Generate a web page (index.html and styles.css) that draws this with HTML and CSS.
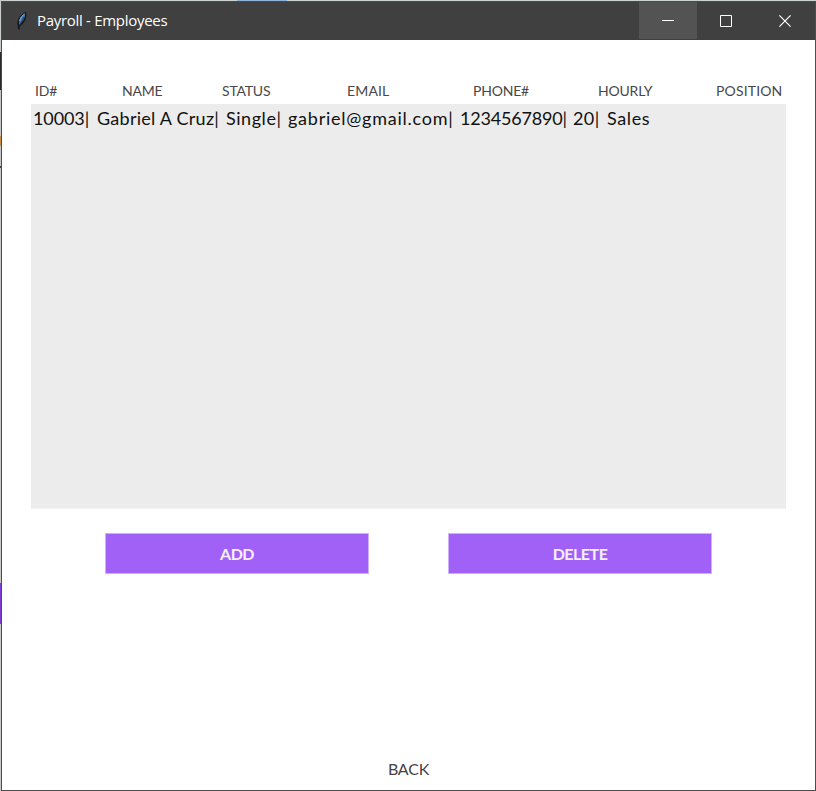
FILE: index.html
```
<!DOCTYPE html>
<html lang="en">
<head>
<meta charset="utf-8">
<title>Payroll - Employees</title>
<link rel="stylesheet" href="styles.css">
</head>
<body>
<div class="window">
  <header class="titlebar">
    <svg class="feather" width="12" height="20" viewBox="0 0 12 20">
      <path d="M2 18 L1.300 12 Q2 5 10 .8 Q11.500 7 7.500 12 L4 15.500 L3.300 19Z" fill="#151719"/>
      <path d="M3 12.500 Q3 6 9 2.500 Q9.500 7 6 11 L3.500 14Z" fill="#3f76b8"/>
      <path d="M3.500 10 Q4.500 5.500 8.500 3" stroke="#8cb4dc" fill="none"/>
      <path d="M3 16 L8 6" stroke="#18283c" stroke-width=".8"/>
    </svg>
    <h1 class="title">Payroll - Employees</h1>
    <button class="control minimize" aria-label="Minimize"><svg width="12" height="12"><path d="M0 5.500H12" stroke="#fff"/></svg></button>
    <button class="control" aria-label="Maximize"><svg width="12" height="12"><path d="M.5 .5H11.500V11.500H.5Z" stroke="#fff" fill="none"/></svg></button>
    <button class="control" aria-label="Close"><svg width="12" height="12"><path d="M.4 .4L11.600 11.600M11.600 .4L.4 11.600" stroke="#fff" stroke-width="1.200"/></svg></button>
  </header>
  <main class="content">
    <div class="headings">
      <span>ID#</span><span>NAME</span><span>STATUS</span><span class="wide">EMAIL</span><span>PHONE#</span><span>HOURLY</span><span class="wide">POSITION</span>
    </div>
    <div class="list">
      <div class="record">
        <span class="id">10003|</span><span class="name">Gabriel A Cruz|</span><span class="status">Single|</span><span class="email">gabriel@gmail.com|</span><span class="phone">1234567890|</span><span class="hourly">20|</span><span class="position">Sales</span>
      </div>
    </div>
    <div class="actions">
      <button class="action">ADD</button>
      <button class="action">DELETE</button>
    </div>
    <button class="back">BACK</button>
  </main>
</div>
</body>
</html>
```
FILE: styles.css
```
* { box-sizing: border-box; }
body {
  margin: 0;
  width: 816px;
  height: 791px;
  padding: 1px 0 0 1px;
  overflow: hidden;
  background:
    linear-gradient(#8db4d8, #8db4d8) 237px 0 / 50px 1px no-repeat,
    linear-gradient(90deg, #cbd2d0, #cbd2d0) 2px 0 / 814px 1px no-repeat,
    linear-gradient(#c6cbca 0 52px, #28282a 52px 90px, #c6c6c6 90px 136px, #c98b48 136px 146px, #c6c6c6 146px 166px, #444 166px 168px, #c8c8c8 168px 583px, #7d3fd0 583px 624px, #c8c8c8 624px);
}
button { border: 0; padding: 0; font: inherit; color: inherit; background: none; }
.window {
  width: 815px;
  height: 790px;
  display: flex;
  flex-direction: column;
  border: 1px solid #4c4c4c;
  border-top-color: #484b4a;
  background: #fff;
}
.titlebar {
  height: 38px;
  flex: none;
  display: flex;
  align-items: center;
  padding-left: 14px;
  background: #404040;
  color: #fff;
}
.feather { flex: none; margin-top: -1px; }
.title {
  flex: 1;
  margin: -2px 0 0 9px;
  font: 400 15px/20px "Open Sans", sans-serif;
  letter-spacing: -.3px;
}
.control {
  width: 58px;
  height: 38px;
  display: flex;
  align-items: center;
  justify-content: center;
}
.control:last-child { width: 60px; }
.minimize { height: 37px; margin-bottom: 1px; padding-top: 1px; background: #535353; }
.content {
  flex: 1;
  display: flex;
  flex-direction: column;
  padding: 41px 29px 11px;
  font-family: Lato, "Liberation Sans", sans-serif;
}
.headings {
  display: grid;
  grid-template-columns: 87px 100px 125px 126px 125px 118px 69px;
  padding-left: 4px;
  height: 23px;
  font-size: 14px;
  line-height: 20px;
  letter-spacing: -.2px;
  color: #484848;
}
.headings .wide { letter-spacing: .15px; }
.list {
  height: 405px;
  padding: 2px;
  background: #ececec;
  border-bottom: 1px solid #f3f3f3;
}
.record {
  display: grid;
  grid-template-columns: 64px 129px 62px 172px 113px 34px 50px;
  font-size: 18px;
  line-height: 24px;
  white-space: pre;
  color: #111;
}
.id { letter-spacing: -.1px; }
.name { letter-spacing: .26px; }
.status { letter-spacing: .55px; }
.email { letter-spacing: .75px; }
.phone { letter-spacing: -.2px; }
.hourly { letter-spacing: .4px; }
.position { letter-spacing: .6px; }
.actions {
  display: flex;
  gap: 79px;
  margin: 24px 0 0 74px;
}
.action {
  width: 264px;
  height: 41px;
  border: 1px solid #cfb0fb;
  background: #a161f7;
  color: #f5efff;
  font-size: 16px;
  font-weight: 700;
  letter-spacing: -.5px;
}
.back {
  align-self: center;
  margin-top: auto;
  height: 20px;
  font-size: 16px;
  line-height: 20px;
  letter-spacing: -.2px;
  color: #444;
}
```
